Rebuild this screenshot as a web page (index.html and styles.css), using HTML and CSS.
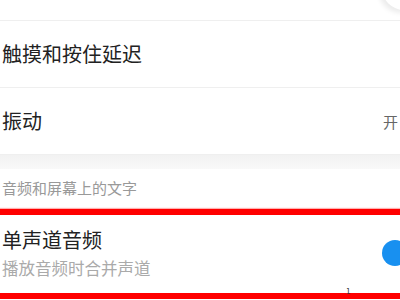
FILE: index.html
```html
<!DOCTYPE html>
<html lang="zh-CN">
<head>
  <meta charset="UTF-8">
  <title>无障碍</title>
  <link rel="stylesheet" href="styles.css">
</head>
<body>

<div class="list">
  <div class="row row-top">
    <div class="thumb-gray"></div>
  </div>

  <div class="row">
    <span class="title">触摸和按住延迟</span>
  </div>

  <div class="row">
    <span class="title">振动</span>
    <span class="value">开</span>
  </div>

  <div class="gap"></div>

  <div class="section">音频和屏幕上的文字</div>

  <div class="row row-mark">
    <div class="texts">
      <span class="title">单声道音频</span>
      <span class="summary">播放音频时合并声道</span>
    </div>
    <div class="switch"></div>
    <span class="tick">1</span>
  </div>
</div>

</body>
</html>
```

FILE: styles.css
```css
body {
  margin: 0;
  padding: 0;
  background: #fff;
  font-family: "Noto Sans CJK SC", "Noto Sans", sans-serif;
  overflow: hidden;
}

.list {
  width: 400px;
}

.row {
  display: flex;
  align-items: center;
  justify-content: space-between;
  height: 66px;
  padding-left: 2px;
  border-bottom: 1px solid #efefef;
  position: relative;
}

.row-top {
  height: 20px;
  align-items: flex-end;
  justify-content: flex-end;
  overflow: hidden;
}

.thumb-gray {
  width: 44px;
  height: 44px;
  border-radius: 50%;
  margin-right: -26px;
  margin-bottom: 10px;
  background: #fff;
  box-shadow: -3px 3px 5px rgba(0, 0, 0, 0.08);
}

.title {
  font-size: 20px;
  color: #222;
  line-height: 1;
}

.value {
  font-size: 15px;
  color: #666;
  margin-right: 2px;
}

.gap {
  height: 14px;
  background: linear-gradient(#f2f2f2, #f9f9f9);
}

.section {
  height: 40px;
  line-height: 38px;
  padding-left: 2px;
  font-size: 15px;
  color: #999;
}

.row-mark {
  height: 78px;
  border-top: 6px solid #f00;
  border-bottom: 6px solid #f00;
  box-shadow: 0 -1px 1px #ffb0b0, 0 1px 1px #ffb0b0;
}

.texts {
  display: flex;
  flex-direction: column;
  gap: 10px;
  padding-bottom: 1px;
}

.summary {
  font-size: 16.5px;
  color: #aaa;
  line-height: 1;
}

.switch {
  width: 26px;
  height: 26px;
  border-radius: 50%;
  background: #1890f0;
  margin-right: -8px;
  margin-top: -2px;
}

.tick {
  position: absolute;
  left: 346px;
  bottom: -2px;
  font-size: 8px;
  color: #333;
  line-height: 1;
}
```
